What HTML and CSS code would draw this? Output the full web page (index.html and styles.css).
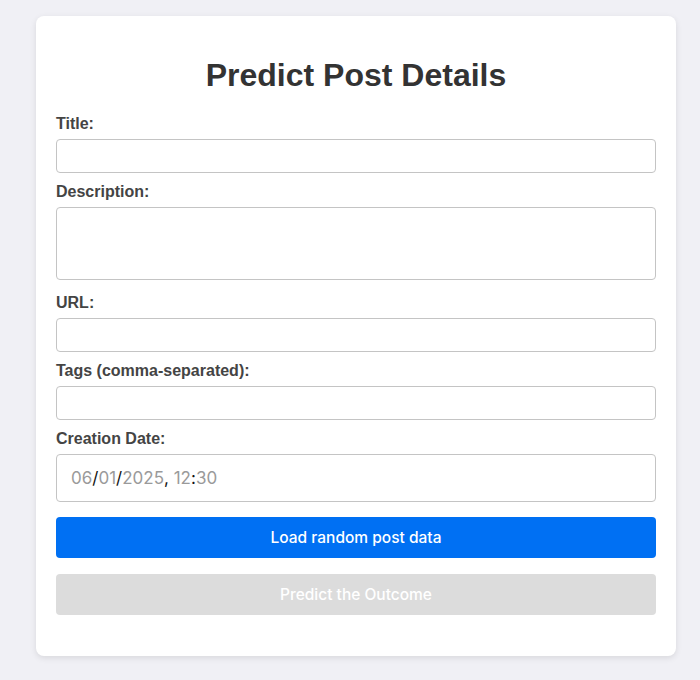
FILE: index.html
```html
<!DOCTYPE html>
<html lang="en">
<head>
<meta charset="utf-8">
<title>Predict Post Details</title>
<link rel="stylesheet" href="styles.css">
</head>
<body>
<div class="card">
  <h1 class="heading">Predict Post Details</h1>
  <form class="form">
    <label class="label" for="title">Title:</label>
    <input class="field" id="title" type="text">
    <label class="label" for="desc">Description:</label>
    <textarea class="field area" id="desc"></textarea>
    <label class="label" for="url">URL:</label>
    <input class="field" id="url" type="text">
    <label class="label" for="tags">Tags (comma-separated):</label>
    <input class="field" id="tags" type="text">
    <label class="label">Creation Date:</label>
    <div class="field date"><span class="dim">06</span><span class="sep">/</span><span class="dim">01</span><span class="sep">/</span><span class="dim">2025</span><span class="sep">, </span><span class="dim">12</span><span class="sep">:</span><span class="dim">30</span></div>
    <button class="btn primary" type="button">Load random post data</button>
    <button class="btn disabled" type="button" disabled>Predict the Outcome</button>
  </form>
</div>
</body>
</html>
```
FILE: styles.css
```css
html, body {
  margin: 0;
  padding: 0;
  background: #f0f0f5;
}
body {
  font-family: "Liberation Sans", Arial, sans-serif;
  padding: 16px 24px 24px 36px;
}
.card {
  width: 640px;
  box-sizing: border-box;
  background: #fff;
  border-radius: 8px;
  box-shadow: 0 2px 6px rgba(0,0,0,0.1);
  padding: 20px 20px 25px;
}
.heading {
  font-size: 32px;
  font-weight: bold;
  color: #333;
  text-align: center;
  margin: 21px 0 22px;
  line-height: 36px;
}
.form {
  display: flex;
  flex-direction: column;
}
.label {
  font-size: 16px;
  font-weight: bold;
  color: #444;
  line-height: 18px;
  margin-bottom: 6px;
}
.field {
  box-sizing: border-box;
  width: 100%;
  height: 34px;
  border: 1px solid #c4c4c4;
  border-radius: 4px;
  padding: 8px;
  font-size: 16px;
  font-family: "Inter", "Liberation Sans", sans-serif;
  margin: 0 0 10px;
  background: #fff;
}
.area {
  height: 73px;
  resize: none;
  margin-bottom: 14px;
}
.date {
  height: 48px;
  padding: 0 14px;
  display: flex;
  align-items: center;
  font-size: 17px;
  color: #000;
  margin-bottom: 15px;
}
.dim {
  color: #9a9a9a;
}
.sep {
  color: #111;
  white-space: pre;
}
.btn {
  display: block;
  width: 100%;
  height: 41px;
  border: none;
  border-radius: 4px;
  font-family: "Inter", "Liberation Sans", sans-serif;
  font-size: 15.5px;
  font-weight: 500;
  color: #fff;
  margin-bottom: 16px;
}
.primary {
  background: #0070f3;
}
.disabled {
  background: #dcdcdc;
  color: #fff;
}
```
